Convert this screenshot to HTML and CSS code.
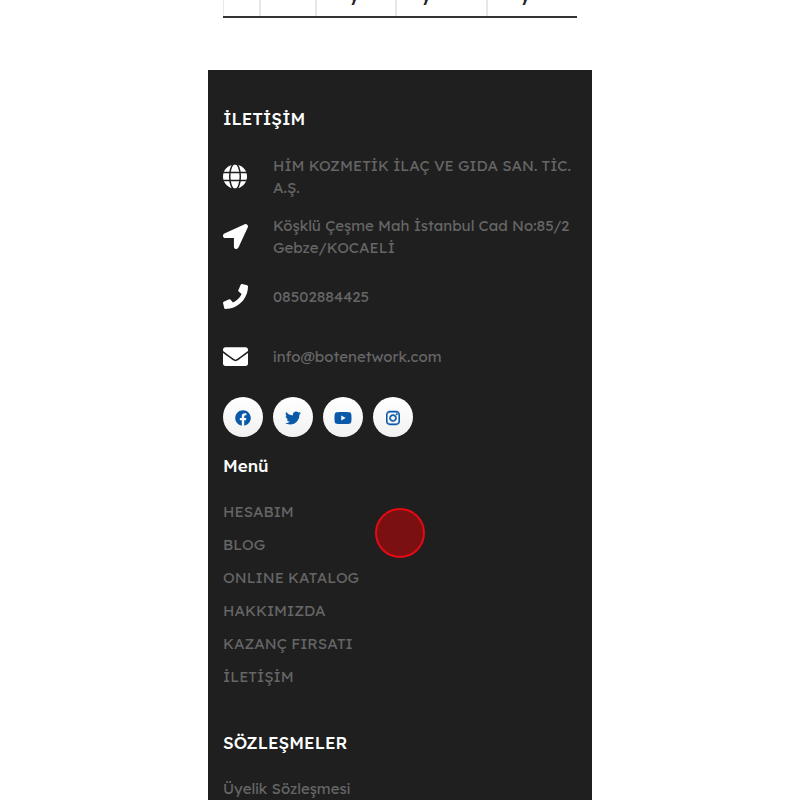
FILE: index.html
```html
<!DOCTYPE html>
<html lang="tr">
<head>
    <meta charset="UTF-8">
    <meta name="viewport" content="width=device-width, initial-scale=1.0">
    <title>İletişim</title>
    <link rel="stylesheet" href="styles.css">
</head>
<body>
    <div class="page">
        <div class="table-wrap">
            <table class="list-table">
                <colgroup>
                    <col class="col-check">
                    <col class="col-no">
                    <col class="col-a">
                    <col class="col-b">
                    <col>
                </colgroup>
                <tr>
                    <th></th>
                    <th></th>
                    <th class="pad-l">y</th>
                    <th class="pad-m">y</th>
                    <th class="pad-l">y</th>
                </tr>
            </table>
        </div>

        <footer class="footer">
            <h4>İLETİŞİM</h4>
            <ul class="contact">
                <li>
                    <svg class="icon" viewBox="0 0 25 25"><circle cx="12" cy="12.500" r="12"/><g class="globe-lines"><ellipse cx="12" cy="12.500" rx="5.300" ry="13"/><path d="M0 8.500h24M0 16.500h24"/></g></svg>
                    <span>HİM KOZMETİK İLAÇ VE GIDA SAN. TİC. A.Ş.</span>
                </li>
                <li>
                    <svg class="icon" viewBox="0 0 512 512"><path d="M444.520 3.520L28.740 195.420c-47.970 22.390-31.980 92.750 19.190 92.750h175.910v175.910c0 51.170 70.360 67.170 92.750 19.190l191.900-415.780c15.990-38.390-25.590-79.970-63.970-63.970z"/></svg>
                    <span>Köşklü Çeşme Mah İstanbul Cad No:85/2 Gebze/KOCAELİ</span>
                </li>
                <li>
                    <svg class="icon" viewBox="0 0 512 512"><path d="M493.400 24.600l-104-24c-11.300-2.600-22.900 3.300-27.500 13.900l-48 112c-4.200 9.800-1.400 21.300 6.900 28l60.600 49.600c-36 76.700-98.900 140.500-177.200 177.200l-49.600-60.600c-6.800-8.300-18.200-11.100-28-6.900l-112 48C3.900 366.500-2 378.100.6 389.400l24 104C27.100 504.200 36.700 512 48 512c256.100 0 464-207.500 464-464 0-11.200-7.700-20.900-18.600-23.400z"/></svg>
                    <a href="tel:08502884425">08502884425</a>
                </li>
                <li>
                    <svg class="icon" viewBox="0 0 512 512"><path d="M502.300 190.800c3.900-3.100 9.700-.2 9.700 4.700V400c0 26.500-21.500 48-48 48H48c-26.500 0-48-21.500-48-48V195.600c0-5 5.700-7.800 9.700-4.700 22.400 17.400 52.100 39.500 154.100 113.600 21.100 15.400 56.700 47.800 92.200 47.600 35.700.3 72-32.800 92.300-47.600 102-74.100 131.600-96.300 154-113.700zM256 320c23.200.4 56.600-29.200 73.400-41.400 132.700-96.300 142.800-104.700 173.400-128.700 5.800-4.500 9.200-11.500 9.200-18.900v-19c0-26.500-21.500-48-48-48H48c-26.500 0-48 21.500-48 48v19c0 7.400 3.400 14.300 9.200 18.900 30.600 23.900 40.700 32.400 173.400 128.700 16.800 12.200 50.200 41.800 73.400 41.400z"/></svg>
                    <a href="mailto:info@botenetwork.com">info@botenetwork.com</a>
                </li>
            </ul>

            <div class="social">
                <a href="#" aria-label="Facebook"><svg viewBox="0 0 512 512"><path d="M504 256C504 119 393 8 256 8S8 119 8 256c0 123.780 90.690 226.380 209.250 245V327.690h-63V256h63v-54.640c0-62.150 37-96.480 93.670-96.480 27.140 0 55.520 4.840 55.520 4.840v61h-31.280c-30.800 0-40.410 19.120-40.410 38.730V256h68.780l-11 71.690h-57.780V501C413.310 482.380 504 379.780 504 256z"/></svg></a>
                <a href="#" aria-label="Twitter"><svg viewBox="0 0 512 512"><path d="M459.370 151.716c.325 4.548.325 9.097.325 13.645 0 138.720-105.583 298.558-298.558 298.558-59.452 0-114.680-17.219-161.137-47.106 8.447.974 16.568 1.299 25.340 1.299 49.055 0 94.213-16.568 130.274-44.832-46.132-.975-84.792-31.188-98.112-72.772 6.498.974 12.995 1.624 19.818 1.624 9.421 0 18.843-1.300 27.614-3.573-48.081-9.747-84.143-51.980-84.143-102.985v-1.299c13.969 7.797 30.214 12.670 47.431 13.319-28.264-18.843-46.781-51.005-46.781-87.391 0-19.492 5.197-37.360 14.294-52.954 51.655 63.675 129.300 105.258 216.365 109.807-1.624-7.797-2.599-15.918-2.599-24.040 0-57.828 46.782-104.934 104.934-104.934 30.213 0 57.502 12.670 76.670 33.137 23.715-4.548 46.456-13.320 66.599-25.340-7.798 24.366-24.366 44.833-46.132 57.827 21.117-2.273 41.584-8.122 60.426-16.243-14.292 20.791-32.161 39.308-52.628 54.253z"/></svg></a>
                <a href="#" aria-label="YouTube"><svg viewBox="0 0 576 512"><path d="M549.655 124.083c-6.281-23.650-24.787-42.276-48.284-48.597C458.781 64 288 64 288 64S117.220 64 74.629 75.486c-23.497 6.322-42.003 24.947-48.284 48.597-11.412 42.867-11.412 132.305-11.412 132.305s0 89.438 11.412 132.305c6.281 23.650 24.787 41.500 48.284 47.821C117.220 448 288 448 288 448s170.780 0 213.371-11.486c23.497-6.321 42.003-24.171 48.284-47.821 11.412-42.867 11.412-132.305 11.412-132.305s0-89.438-11.412-132.305zM232.145 337.591V175.185l142.739 81.205-142.739 81.201z"/></svg></a>
                <a href="#" aria-label="Instagram"><svg class="outlined" viewBox="0 0 448 512"><path d="M224.100 141c-63.600 0-114.900 51.300-114.900 114.900s51.300 114.900 114.900 114.900S339 319.500 339 255.900 287.700 141 224.100 141zm0 189.600c-41.100 0-74.700-33.500-74.700-74.700s33.500-74.700 74.700-74.700 74.700 33.500 74.700 74.700-33.600 74.700-74.700 74.700zm146.400-194.300c0 14.900-12 26.800-26.800 26.800-14.900 0-26.800-12-26.800-26.800s12-26.800 26.800-26.800 26.800 12 26.800 26.800zm76.100 27.200c-1.700-35.900-9.900-67.700-36.200-93.900-26.200-26.200-58-34.400-93.900-36.200-37-2.100-147.900-2.100-184.900 0-35.800 1.700-67.600 9.900-93.900 36.100s-34.400 58-36.200 93.900c-2.100 37-2.100 147.900 0 184.900 1.700 35.900 9.900 67.700 36.200 93.900s58 34.400 93.900 36.200c37 2.100 147.900 2.100 184.900 0 35.900-1.700 67.700-9.900 93.900-36.200 26.200-26.200 34.400-58 36.200-93.900 2.100-37 2.100-147.800 0-184.800zM398.800 388c-7.800 19.600-22.900 34.700-42.600 42.600-29.500 11.700-99.500 9-132.100 9s-102.700 2.600-132.100-9c-19.600-7.800-34.700-22.900-42.600-42.600-11.700-29.500-9-99.500-9-132.100s-2.600-102.700 9-132.100c7.800-19.600 22.900-34.700 42.600-42.600 29.500-11.700 99.500-9 132.100-9s102.700-2.600 132.100 9c19.600 7.800 34.700 22.900 42.600 42.600 11.700 29.500 9 99.500 9 132.100s2.700 102.700-9 132.100z"/></svg></a>
            </div>

            <h4>Menü</h4>
            <ul class="links">
                <li><a href="#">HESABIM</a></li>
                <li><a href="#">BLOG</a></li>
                <li><a href="#">ONLINE KATALOG</a></li>
                <li><a href="#">HAKKIMIZDA</a></li>
                <li><a href="#">KAZANÇ FIRSATI</a></li>
                <li><a href="#">İLETİŞİM</a></li>
            </ul>

            <h4>SÖZLEŞMELER</h4>
            <ul class="links">
                <li><a href="#">Üyelik Sözleşmesi</a></li>
            </ul>
        </footer>
    </div>

    <div class="pointer"></div>
</body>
</html>
```
FILE: styles.css
```css
* {
    box-sizing: border-box;
}
body {
    margin: 0;
    background: #fff;
    color: #212529;
    font-family: Lexend, Inter, sans-serif;
    font-size: 15px;
    line-height: 22px;
    overflow: hidden;
}
.page {
    max-width: 384px;
    margin: 0 auto;
}
ul {
    list-style: none;
    margin: 0;
    padding: 0;
}
a {
    color: inherit;
    text-decoration: none;
}

/* table */
.table-wrap {
    display: flex;
    align-items: flex-end;
    height: 18px;
    margin: 0 15px 52px;
    overflow: hidden;
}
.list-table {
    width: 100%;
    table-layout: fixed;
    border-collapse: separate;
    border-spacing: 0;
    border-bottom: 2px solid #333;
}
.list-table th {
    height: 40px;
    padding: 0 0 10px;
    border-left: 2px solid #e8e8e8;
    font-size: 17px;
    font-weight: 600;
    text-align: left;
    vertical-align: bottom;
}
.list-table th:first-child {
    border-left-width: 1px;
}
.list-table .pad-l {
    padding-left: 32px;
}
.list-table .pad-m {
    padding-left: 24px;
}
.col-check {
    width: 36px;
}
.col-no {
    width: 56px;
}
.col-a {
    width: 80px;
}
.col-b {
    width: 91px;
}

/* footer */
.footer {
    padding: 38px 15px 0;
    background: #1f1f1f;
    color: #666;
}
.footer h4 {
    margin: 0 0 18px;
    color: #fff;
    font-size: 17px;
    font-weight: 500;
}
.contact {
    display: grid;
    gap: 16px;
    padding-top: 7px;
}
.contact li {
    display: flex;
    align-items: center;
    gap: 25px;
    min-height: 44px;
}
.icon {
    flex: none;
    width: 25px;
    height: 25px;
    margin-bottom: 2px;
    fill: #fff;
}
.globe-lines {
    fill: none;
    stroke: #1f1f1f;
    stroke-width: 1.5;
}
.social {
    display: flex;
    gap: 10px;
    margin: 18px 0;
}
.social a {
    display: flex;
    align-items: center;
    justify-content: center;
    width: 40px;
    height: 40px;
    padding-top: 2px;
    border-radius: 50%;
    background: linear-gradient(#fff, #f1f1f1);
}
.social svg {
    height: 16px;
    fill: #0a58a8;
}
.social .outlined {
    stroke: #0a58a8;
    stroke-width: 16;
}
.links {
    line-height: 33px;
}
.links + h4 {
    margin-top: 39px;
}

/* touch pointer */
.pointer {
    position: fixed;
    top: 508px;
    left: 50%;
    width: 50px;
    height: 50px;
    margin-left: -25px;
    border: 2px solid #e30b13;
    border-radius: 50%;
    background: #7a1012;
}
```
